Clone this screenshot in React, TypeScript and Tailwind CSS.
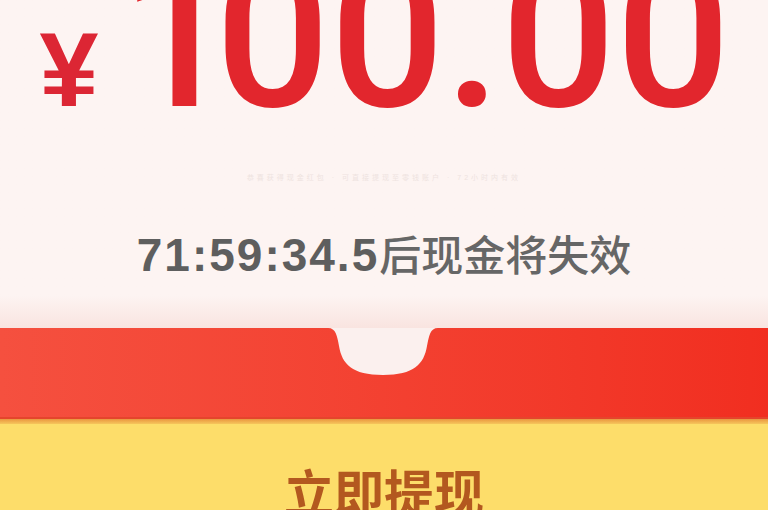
const digitFont = { fontFamily: "Roboto, 'Liberation Sans', sans-serif" };

const Notch = () => (
  <svg
    className="absolute left-[328px] top-0"
    width="110"
    height="48"
    viewBox="0 0 110 48"
  >
    <path
      d="M0 0 H110 C102 0 101 8 99 18 C96 36 86 47 55 47 C24 47 14 36 11 18 C9 8 8 0 0 0 Z"
      fill="#fbf0ee"
    />
  </svg>
);

export default function App() {
  return (
    <div className="w-[768px] h-[510px] overflow-hidden flex flex-col font-['Liberation_Sans','Noto_Sans_CJK_SC',sans-serif]">
      <div className="shrink-0 h-[328px] bg-gradient-to-b from-[#fdf4f2] via-[#fdf4f2] via-90% to-[#f9e4e0] flex flex-col items-center">
        <div className="-mt-[64px] h-[202px] flex items-baseline leading-none text-[#e2262d] pl-[2px]">
          <span className="text-[106px] font-bold text-[#dc2634] mr-[22px]">¥</span>
          <span
            className="text-[202px] font-medium mr-[-20px]"
            style={digitFont}
          >
            1
          </span>
          <span className="text-[202px] font-medium" style={digitFont}>
            00.00
          </span>
        </div>
        <div className="mt-[36px] h-[8px] text-[7px] leading-[8px] text-[#eee3e0] tracking-[3px]">
          恭喜获得现金红包 · 可直接提现至零钱账户 · 72小时内有效
        </div>
        <div className="mt-[47px] flex items-baseline leading-[48px]">
          <span className="text-[46px] font-bold text-[#5e5e5e] tracking-[2px]">
            71:59:34.5
          </span>
          <span className="text-[42px] text-[#666666] font-['Noto_Sans_CJK_SC',sans-serif] font-medium">
            后现金将失效
          </span>
        </div>
      </div>
      <div className="shrink-0 relative h-[91px] bg-gradient-to-r from-[#f5503f] to-[#f12e20] border-b-[2px] border-[#e4452c]">
        <Notch />
      </div>
      <div className="shrink-0 h-[5px] bg-gradient-to-b from-[#e9963f] to-[#f6c65c]" />
      <div className="flex-1 bg-[#fddd6a] flex justify-center pt-[41px]">
        <span className="text-[50px] leading-none font-bold text-[#b3581f] font-['Noto_Sans_CJK_SC',sans-serif]">
          立即提现
        </span>
      </div>
    </div>
  );
}
